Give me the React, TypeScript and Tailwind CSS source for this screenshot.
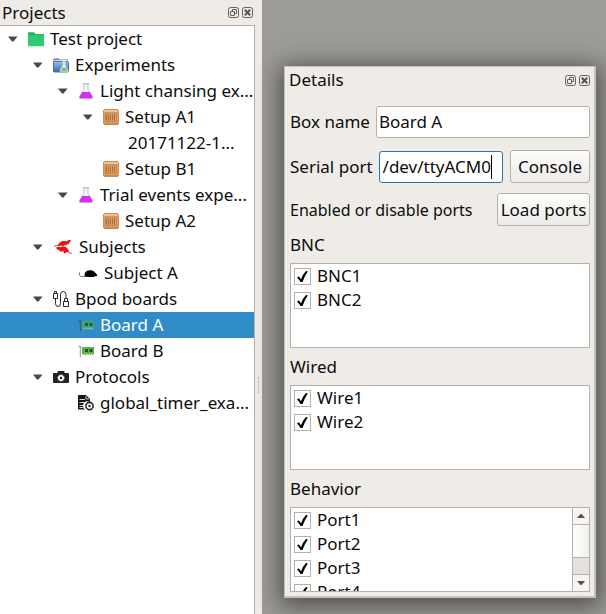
import { useState } from "react";
import type { ReactNode } from "react";

function FolderIcon() {
  return (
    <svg width="16" height="16" viewBox="0 0 16 16" className="shrink-0">
      <path d="M0 2.2Q0 1.2 1 1.2H6L7.5 3H15Q16 3 16 4V8H0z" fill="#27ae60" />
      <rect x="0" y="4.2" width="16" height="11" rx="1" fill="#2ecc71" />
    </svg>
  );
}

function ExperimentsIcon() {
  return (
    <svg width="16" height="16" viewBox="0 0 16 16" className="shrink-0">
      <defs>
        <linearGradient id="exp" x1="0" y1="0" x2="0" y2="1">
          <stop offset="0" stopColor="#9cc3ea" />
          <stop offset="1" stopColor="#3068ac" />
        </linearGradient>
      </defs>
      <path d="M.5 4V2Q.5 1.500 1 1.500H5.500L6.500 2.500H15V5H.5z" fill="#777b80" />
      <path d="M1.500 3H14.500V5H1.500z" fill="#e6e8ea" />
      <rect x=".5" y="4.500" width="15" height="10.500" rx="1" fill="url(#exp)" stroke="#3f74b0" />
      <path d="M9.500 4.500H12.500M10 4.500V8L7 13.500Q6.800 14.800 8 14.800H14.200Q15.500 14.800 15 13.500L12 8V4.500" fill="#e7f1f4" stroke="#c8d8dc" strokeWidth=".8" />
      <path d="M9.300 10.500H12.700L14.300 13.600Q14.400 14.300 14 14.300H8.200Q7.500 14.300 7.700 13.500z" fill="#80c46a" />
    </svg>
  );
}

function FlaskIcon() {
  return (
    <svg width="16" height="16" viewBox="0 0 16 16" className="shrink-0">
      <path d="M6 1V6.500L1.800 13.500Q1 15.500 3 15.500H13Q15 15.500 14.200 13.500L10 6.500V1" fill="#f3f7f6" stroke="#b5c5c2" strokeWidth="1" />
      <path d="M5 .8H11" stroke="#a9bbb7" strokeWidth="1.200" />
      <path d="M4.200 9H11.800L14.500 13.700Q15 15.300 13.300 15.300H2.700Q1 15.300 1.500 13.700z" fill="#d62ff7" />
    </svg>
  );
}

function CrateIcon() {
  return (
    <svg width="16" height="16" viewBox="0 0 16 16" className="shrink-0">
      <rect x=".5" y=".5" width="15" height="15" rx="1.500" fill="#dea064" stroke="#cb9059" />
      <path d="M1 1H15V3H1z" fill="#f2c08d" />
      <rect x="2.500" y="4" width="11" height="8.500" fill="#dca066" stroke="#c08148" strokeWidth=".8" />
      <path d="M3.500 5.500V11.500M5.500 5.500V11.500M7.500 5.500V11.500M9.500 5.500V11.500M11.500 5.500V11.500" stroke="#a06a38" strokeWidth=".9" />
      <path d="M1 14.800H15" stroke="#bf8249" />
    </svg>
  );
}

function RatsIcon() {
  return (
    <svg width="20" height="16" viewBox="0 0 20 16" className="shrink-0">
      <g fill="#ee1111">
        <path d="M5 6.500Q5.500 3 10 2L14 2.200L16 .8L18 1.200L17.500 2.600L16.500 3.200L16 5.300L14 5L13.500 6.500L12 6L10 7.200L8 6.300L6.500 7.500z" />
        <path d="M3 8.800L4.500 7.800L7 8.200L9.500 7.600Q13 7.500 15 10L16 12.500L15 13.500L13.500 13L12 14.500L10.500 14.200L11 12.800L8.500 12.200L7 13L6.500 11.200L4.500 10.800z" />
      </g>
      <path d="M6 6.500Q3 6 1 7.500M15 12.800Q17 14.600 19 14.200" fill="none" stroke="#ee1111" strokeWidth=".8" />
    </svg>
  );
}

function MouseIcon() {
  return (
    <svg width="20" height="16" viewBox="0 0 20 16" className="shrink-0">
      <path d="M6.500 10.500Q6.500 5.500 11.500 5.200Q15.500 5 17 7.500L19.300 10L18.500 11.300L16 11.500V12H12L8 11.800Q6.500 12 6.500 10.500z" fill="#000" />
      <path d="M7.500 11.500H3Q.5 11 1.500 7.500" fill="none" stroke="#555" strokeWidth=".8" />
    </svg>
  );
}

function CableIcon() {
  return (
    <svg width="16" height="18" viewBox="0 0 16 18" className="shrink-0" fill="none" stroke="#2a2a2a" strokeWidth="1">
      <path d="M1.500 1.500H3.500V3.500H1.500zM.5 3.500H4.500V8.500H.5zM2.500 8.500V13.500Q2.500 16.500 5 16.500T7.500 13.500V4.500Q7.500 1.500 10.200 1.500T13 4.500V8.500M11.500 8.500H14.500V11.500H11.500zM10.500 11.500H15.500V16.500H10.500z" />
    </svg>
  );
}

function BoardIcon({ selected = false }: { selected?: boolean }) {
  return (
    <svg width="16" height="16" viewBox="0 0 16 16" className="shrink-0">
      <path d="M.5 3.500H2.500V14" fill="none" stroke={selected ? "#3c617c" : "#a8aaaa"} strokeWidth="1.500" />
      <rect x="4" y="4" width="12" height="7" fill={selected ? "#43a277" : "#5cb350"} />
      <path d="M7 6H10V9H7zM11.500 6H14.500V9H11.500z" fill={selected ? "#1c5450" : "#22592b"} />
      <path d="M5 11.500H16" stroke={selected ? "#9cc98a" : "#a9bf4e"} strokeWidth="1.500" strokeDasharray="1.500 .7" />
    </svg>
  );
}

function ProtocolsIcon() {
  return (
    <svg width="16" height="16" viewBox="0 0 16 16" className="shrink-0">
      <path d="M4.500 4V3Q4.500 2 5.500 2H10.500Q11.500 2 11.500 3V4H15Q16 4 16 5V13Q16 14 15 14H1Q0 14 0 13V5Q0 4 1 4z" fill="#222" />
      <circle cx="8" cy="9" r="2.100" fill="none" stroke="#fff" strokeWidth="1.800" />
      <circle cx="8" cy="9" r="3.200" fill="none" stroke="#fff" strokeWidth=".8" strokeDasharray="1.250 1.260" />
    </svg>
  );
}

function ScriptIcon() {
  return (
    <svg width="16" height="18" viewBox="0 0 16 18" className="shrink-0">
      <path d="M0 1H8L12 5V8A4.500 4.500 0 0 0 7 15.500H0z" fill="#181818" />
      <path d="M1.500 5.500H7M1.500 8.500H9M1.500 11.500H6M1.500 13.500H5M8 2V5H11" stroke="#fff" strokeWidth=".8" fill="none" />
      <circle cx="11.500" cy="12" r="3.500" fill="#fff" stroke="#181818" strokeWidth="1.300" />
      <circle cx="11.500" cy="12" r="4.200" fill="none" stroke="#181818" strokeWidth=".8" strokeDasharray="1.600 1.700" />
      <circle cx="11.500" cy="12" r="1.200" fill="#181818" />
    </svg>
  );
}

function DockButtons() {
  return (
    <div className="flex gap-[3px]">
      <button type="button" aria-label="Float" className="block">
        <svg width="11" height="11" viewBox="0 0 11 11" fill="none" stroke="#65625e">
          <rect x=".5" y=".5" width="10" height="10" rx="2" />
          <path d="M4.500 4V2.500H8.500V6.500H7M2.500 4.500H6.500V8.500H2.500z" />
        </svg>
      </button>
      <button type="button" aria-label="Close" className="block">
        <svg width="11" height="11" viewBox="0 0 11 11" fill="none" stroke="#65625e">
          <rect x=".5" y=".5" width="10" height="10" rx="2" />
          <path d="M2.800 2.800L8.200 8.200M8.200 2.800L2.800 8.200" strokeWidth="2" stroke="#55524f" />
        </svg>
      </button>
    </div>
  );
}

type Row = { label: string; pad: string; icon?: ReactNode; open?: boolean; selected?: boolean };

const rows: Row[] = [
  { label: "Test project", pad: "pl-[8px]", icon: <FolderIcon />, open: true },
  { label: "Experiments", pad: "pl-[33px]", icon: <ExperimentsIcon />, open: true },
  { label: "Light chansing ex...", pad: "pl-[58px]", icon: <FlaskIcon />, open: true },
  { label: "Setup A1", pad: "pl-[83px]", icon: <CrateIcon />, open: true },
  { label: "20171122-1...", pad: "pl-[108px]" },
  { label: "Setup B1", pad: "pl-[83px]", icon: <CrateIcon /> },
  { label: "Trial events expe...", pad: "pl-[58px]", icon: <FlaskIcon />, open: true },
  { label: "Setup A2", pad: "pl-[83px]", icon: <CrateIcon /> },
  { label: "Subjects", pad: "pl-[33px]", icon: <RatsIcon />, open: true },
  { label: "Subject A", pad: "pl-[58px]", icon: <MouseIcon /> },
  { label: "Bpod boards", pad: "pl-[33px]", icon: <CableIcon />, open: true },
  { label: "Board A", pad: "pl-[58px]", icon: <BoardIcon selected />, selected: true },
  { label: "Board B", pad: "pl-[58px]", icon: <BoardIcon /> },
  { label: "Protocols", pad: "pl-[33px]", icon: <ProtocolsIcon />, open: true },
  { label: "global_timer_exa...", pad: "pl-[58px]", icon: <ScriptIcon /> },
];

function TreeRow({ row }: { row: Row }) {
  return (
    <li
      role="treeitem"
      aria-selected={!!row.selected}
      className={`flex h-[26px] items-center whitespace-nowrap ${row.pad} ${row.selected ? "bg-[#308cc6] text-white" : ""}`}
    >
      <span className="flex w-5 shrink-0">
        {row.open && (
          <svg width="10" height="6" viewBox="0 0 10 6">
            <path d="M0 .5H9.500L5.500 5.500H4z" fill="#484848" />
          </svg>
        )}
      </span>
      {row.icon && <span className="mr-[6px] flex">{row.icon}</span>}
      {row.label}
    </li>
  );
}

function Check({ label }: { label: string }) {
  const [on, setOn] = useState(true);
  return (
    <label className="flex h-6 items-center gap-[6px] pl-[3px]">
      <span className="grid">
        <input
          type="checkbox"
          checked={on}
          onChange={() => setOn(!on)}
          className="col-start-1 row-start-1 size-[17px] appearance-none border border-[#b4b1ad] bg-white"
        />
        {on && (
          <svg width="17" height="17" viewBox="0 0 17 17" className="pointer-events-none col-start-1 row-start-1">
            <path d="M3 9.500L4.800 8.200L7 11.200Q9 6 12 3L13.800 3.500Q10.500 8 8.500 14H6.500Q5 11.500 3 9.500z" fill="#000" />
          </svg>
        )}
      </span>
      {label}
    </label>
  );
}

function ScrollBar() {
  return (
    <div className="flex w-[17px] shrink-0 flex-col border-l border-[#b4b1ad] bg-[#e4e2df]">
      <button type="button" aria-label="Scroll up" className="flex h-4 items-center justify-center bg-[#f6f5f4]">
        <svg width="8" height="4" viewBox="0 0 8 4"><path d="M0 4L3.500 0H4.500L8 4z" fill="#55524f" /></svg>
      </button>
      <div className="h-[34px] border-y border-[#b4b1ad] bg-linear-to-r from-white to-[#f1f0ee]" />
      <div className="flex-1" />
      <button type="button" aria-label="Scroll down" className="flex h-[17px] items-center justify-center border-t border-[#b4b1ad] bg-[#f6f5f4]">
        <svg width="8" height="4" viewBox="0 0 8 4"><path d="M0 0L3.500 4H4.500L8 0z" fill="#55524f" /></svg>
      </button>
    </div>
  );
}

function PortGroup({ title, items, scroll = false }: { title: string; items: string[]; scroll?: boolean }) {
  return (
    <section>
      <h3 className="flex h-[37px] items-center">{title}</h3>
      <div className="flex h-[85px] overflow-hidden border border-[#b4b1ad] bg-white">
        <div className="flex-1">
          {items.map((i) => <Check key={i} label={i} />)}
        </div>
        {scroll && <ScrollBar />}
      </div>
    </section>
  );
}

const buttonClass =
  "h-[33px] shrink-0 rounded-[3px] border border-[#b4b1ad] bg-linear-to-b from-[#fdfdfc] to-[#edebe8] whitespace-nowrap text-[17px]";

export default function App() {
  const [name, setName] = useState("Board A");
  const [port, setPort] = useState("/dev/ttyACM0");
  return (
    <div className="flex min-h-screen bg-[#9c9b96] font-['Noto_Sans',sans-serif] text-[17px] leading-6 text-[#0c0c0c]">
      <aside className="flex w-[262px] shrink-0 bg-[#efebe7]">
        <div className="flex min-w-0 flex-1 flex-col">
          <header className="flex h-[25px] items-center justify-between pr-[2px] pl-[2px]">
            <h2>Projects</h2>
            <DockButtons />
          </header>
          <ul role="tree" className="flex-1 overflow-hidden border-t border-r border-[#b4b1ad] bg-white">
            {rows.map((r) => <TreeRow key={r.label} row={r} />)}
          </ul>
        </div>
        <div className="flex w-[7px] items-center justify-center pt-[156px]">
          <div className="h-4 border-l border-dotted border-[#aaa7a3]" />
        </div>
      </aside>
      <main className="min-w-0 flex-1 pt-[66px] pr-[10px] pb-4 pl-[22px]">
        <section className="border border-r-2 border-b-2 border-[#c4c0bb] bg-[#efebe7] px-1 pb-1 shadow-[0_4px_22px_4px_rgba(0,0,0,0.5)]">
          <header className="flex h-[26px] items-center justify-between">
            <h2>Details</h2>
            <DockButtons />
          </header>
          <div className="pt-3 pl-px">
            <div className="flex h-[33px] items-center gap-[6px]">
              <label htmlFor="box" className="shrink-0">Box name</label>
              <input id="box" value={name} onChange={(e) => setName(e.target.value)} className="h-8 min-w-0 flex-1 rounded-[3px] border border-[#b4b1ad] bg-white px-[2px] outline-none" />
            </div>
            <div className="mt-3 flex h-[33px] items-center">
              <label htmlFor="port" className="shrink-0">Serial port</label>
              <div className="ml-[6px] flex h-8 min-w-0 flex-1 items-center rounded-[3px] border border-[#2a76a8] bg-white pl-[3px]">
                <input id="port" value={port} onChange={(e) => setPort(e.target.value)} className="field-sizing-content min-w-0 outline-none" />
                <span className="h-6 w-px shrink-0 bg-black" />
              </div>
              <button type="button" className={`ml-[7px] w-20 ${buttonClass}`}>Console</button>
            </div>
            <div className="mt-[10px] flex items-center justify-between">
              <span className="text-[16px]">Enabled or disable ports</span>
              <button type="button" className={`w-[93px] ${buttonClass}`}>Load ports</button>
            </div>
            <PortGroup title="BNC" items={["BNC1", "BNC2"]} />
            <PortGroup title="Wired" items={["Wire1", "Wire2"]} />
            <PortGroup title="Behavior" items={["Port1", "Port2", "Port3", "Port4"]} scroll />
          </div>
        </section>
      </main>
    </div>
  );
}
